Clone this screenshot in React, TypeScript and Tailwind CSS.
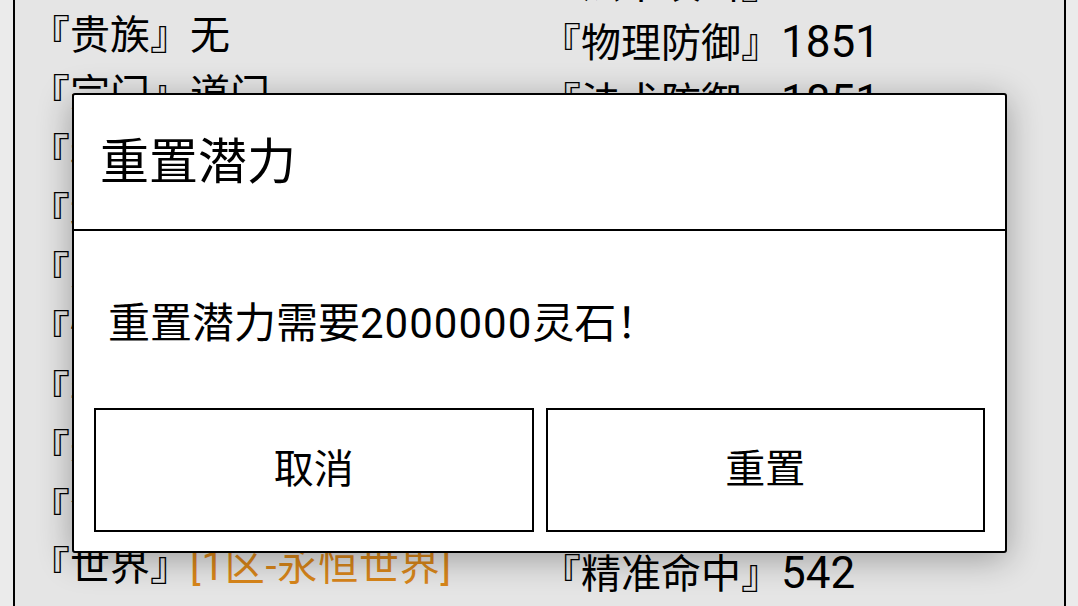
const leftRows: { label: string; value: string; orange?: boolean }[] = [
  { label: "贵族", value: "无" },
  { label: "宗门", value: "道门" },
  { label: "称号", value: "无" },
  { label: "境界", value: "筑基三层" },
  { label: "灵根", value: "金灵根" },
  { label: "性别", value: "男" },
  { label: "年龄", value: "26" },
  { label: "寿元", value: "320" },
  { label: "潜力", value: "1250" },
  { label: "世界", value: "[1区-永恒世界]", orange: true },
  { label: "灵石", value: "2360512" },
];

const rightRows = [
  { label: "法术攻击", value: "2468" },
  { label: "物理防御", value: "1851" },
  { label: "法术防御", value: "1851" },
  { label: "气血上限", value: "15820" },
  { label: "法力上限", value: "6420" },
  { label: "出手速度", value: "312" },
  { label: "暴击几率", value: "8%" },
  { label: "暴击伤害", value: "150%" },
  { label: "闪避几率", value: "5%" },
  { label: "抗暴几率", value: "3%" },
  { label: "精准命中", value: "542" },
];

function StatRow({ label, value, orange }: { label: string; value: string; orange?: boolean }) {
  // numbers come out a bit larger than the CJK glyphs on the device
  const numeric = /^[\d%]+$/.test(value);
  return (
    <div className="h-[59px] whitespace-nowrap text-[40px] leading-[59px] text-black">
      『{label}』
      <span
        className={
          orange ? "tracking-[0.8px] text-[#d8861a]" : numeric ? "text-[44px]" : ""
        }
      >
        {value}
      </span>
    </div>
  );
}

export default function App() {
  return (
    <div className="relative h-[606px] w-[1078px] overflow-hidden bg-[#ebebeb] font-[family-name:Roboto,'Noto_Sans_CJK_SC',sans-serif]">
      <div className="ml-[13px] flex h-full w-[1053px] border-x-2 border-black bg-[#e5e5e5]">
        <div className="w-[526px] shrink-0 pl-[15px] pt-[6px]">
          {leftRows.map((row) => (
            <StatRow key={row.label} {...row} />
          ))}
        </div>
        <div className="-mt-[46px]">
          {rightRows.map((row) => (
            <StatRow key={row.label} {...row} />
          ))}
        </div>
      </div>

      <div className="absolute left-[72px] top-[93px] flex h-[460px] w-[935px] flex-col rounded-[3px] border-2 border-black bg-white shadow-[0_6px_34px_rgba(0,0,0,0.32)]">
        <div className="flex h-[136px] items-center border-b-2 border-black pl-[26px] pt-[2px] text-[49px] text-black">
          重置潜力
        </div>
        <div className="flex flex-1 flex-col px-[20px] pb-[19px]">
          <div className="pl-[14px] pt-[63px] text-[42px] leading-[60px] text-black">
            重置潜力需要<span className="tracking-[1px]">2000000</span>灵石！
          </div>
          <div className="mt-auto flex gap-3">
            <button className="flex h-[124px] flex-1 items-center justify-center border-2 border-black bg-white text-[40px] text-black">
              取消
            </button>
            <button className="flex h-[124px] flex-1 items-center justify-center border-2 border-black bg-white text-[40px] text-black">
              重置
            </button>
          </div>
        </div>
      </div>
    </div>
  );
}
